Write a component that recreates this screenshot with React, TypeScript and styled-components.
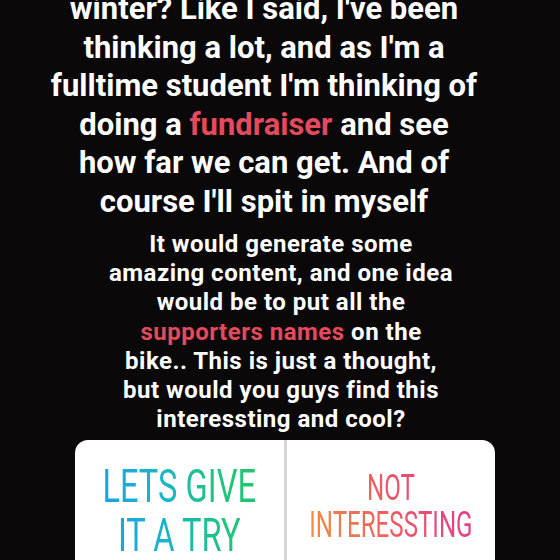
import styled, { createGlobalStyle } from "styled-components";

const Global = createGlobalStyle`
  html, body {
    margin: 0;
    padding: 0;
    background: #0b080a;
    overflow: hidden;
  }
`;

export default function App() {
  return (
    <Story>
      <Global />
      <Caption>
        winter? Like I said, I've been<br />
        thinking a lot, and as I'm a<br />
        fulltime student I'm thinking of<br />
        doing a <Hi>fundraiser</Hi> and see<br />
        how far we can get. And of<br />
        course I'll spit in myself
      </Caption>
      <SubCaption>
        It would generate some<br />
        amazing content, and one idea<br />
        would be to put all the<br />
        <Hi>supporters names</Hi> on the<br />
        bike.. This is just a thought,<br />
        but would you guys find this<br />
        interessting and cool?
      </SubCaption>
      <Poll>
        <Option $top={22}>
          <OptionText $size={46} $line={49} $squeeze={0.71} $tone="yes">
            LETS GIVE<br />IT A TRY
          </OptionText>
        </Option>
        <Divider />
        <Option $top={30}>
          <OptionText $size={36} $line={37} $squeeze={0.67} $tone="no">
            NOT<br />INTERESSTING
          </OptionText>
        </Option>
      </Poll>
    </Story>
  );
}

const Story = styled.div`
  width: 560px;
  height: 560px;
  display: flex;
  flex-direction: column;
  background: #0b080a;
  font-family: Roboto, "Noto Sans", sans-serif;
  color: #fff;
  overflow: hidden;
`;

const Caption = styled.p`
  margin: -10px 0 0 0;
  padding-right: 32px;
  font-size: 31px;
  line-height: 38.5px;
  font-weight: 700;
  text-align: center;
`;

const SubCaption = styled.p`
  margin: 9px 0 0 0;
  padding-left: 2px;
  font-size: 24px;
  line-height: 29.2px;
  font-weight: 700;
  letter-spacing: 0.5px;
  text-align: center;
`;

const Hi = styled.span`
  color: #e34a5c;
`;

const Poll = styled.div`
  margin: 6px 0 0 75px;
  width: 420px;
  height: 140px;
  flex-shrink: 0;
  display: flex;
  background: #fff;
  border-radius: 13px;
  overflow: hidden;
`;

const Option = styled.div<{ $top: number }>`
  flex: 1;
  min-width: 0;
  display: flex;
  justify-content: center;
  align-items: flex-start;
  padding-top: ${(p) => p.$top}px;
`;

const Divider = styled.div`
  width: 3px;
  background: #d6d6d6;
`;

const OptionText = styled.div<{
  $size: number;
  $line: number;
  $squeeze: number;
  $tone: "yes" | "no";
}>`
  flex-shrink: 0;
  font-family: Roboto, "Noto Sans", sans-serif;
  font-weight: 400;
  font-size: ${(p) => p.$size}px;
  line-height: ${(p) => p.$line}px;
  text-align: center;
  white-space: nowrap;
  transform: scaleX(${(p) => p.$squeeze});
  color: transparent;
  background: ${(p) =>
    p.$tone === "yes"
      ? "linear-gradient(75deg, #1a9ee8 0%, #1cb4cc 40%, #21c47c 75%, #22c46e 100%)"
      : "linear-gradient(60deg, #f3903c 0%, #ee6a58 35%, #e9506e 60%, #e2388f 100%)"};
  -webkit-background-clip: text;
  background-clip: text;
`;
